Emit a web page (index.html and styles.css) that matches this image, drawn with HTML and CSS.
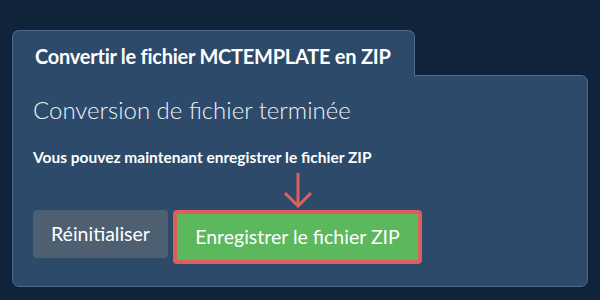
FILE: index.html
```html
<!DOCTYPE html>
<html lang="fr">
<head>
	<meta charset="UTF-8">
	<meta name="viewport" content="width=device-width, initial-scale=1.0">
	<title>Convertir MCTEMPLATE en ZIP</title>
	<link rel="stylesheet" href="styles.css">
</head>
<body>

	<div class="converter">
		<div class="converter__tab">Convertir le fichier MCTEMPLATE en ZIP</div>

		<div class="converter__panel">
			<h2 class="converter__title">Conversion de fichier terminée</h2>
			<p class="converter__text">Vous pouvez maintenant enregistrer le fichier ZIP</p>

			<div class="converter__actions">
				<button class="btn btn--reset">Réinitialiser</button>
				<div class="save">
					<svg class="save__arrow" width="32" height="36" viewBox="0 0 32 36">
						<path d="M16 1 L16 34 M3 21 L16 34 L29 21" fill="none" stroke="#db5f5a" stroke-width="3"/>
					</svg>
					<button class="btn btn--save">Enregistrer le fichier ZIP</button>
				</div>
			</div>
		</div>
	</div>

</body>
</html>
```

FILE: styles.css
```css
*, *::after, *::before {
	box-sizing: border-box;
}

:root {
	--bg: #10233a;
	--panel: #2d4a6a;
	--line: #4e6a8c;
}

body {
	margin: 0;
	padding: 30px 12px 13px;
	background-color: var(--bg);
	font-family: Lato, "Open Sans", sans-serif;
	color: #fff;
}

.converter__tab {
	position: relative;
	z-index: 1;
	display: inline-block;
	width: 403px;
	height: 46px;
	margin-bottom: -1px;
	padding: 13px 0 0 22px;
	font-size: 20px;
	font-weight: bold;
	line-height: 24px;
	letter-spacing: -0.25px;
	background-color: var(--panel);
	border: 1px solid var(--line);
	border-bottom: none;
	border-radius: 7px 7px 0 0;
}

.converter__panel {
	padding: 20px 20px 22px;
	background-color: var(--panel);
	border: 1px solid var(--line);
	border-radius: 0 7px 7px 7px;
}

.converter__title {
	margin: 0;
	font-size: 24px;
	font-weight: 300;
	line-height: 1.2;
	color: #eef2f6;
}

.converter__text {
	margin: 23px 0 0;
	font-size: 15.5px;
	font-weight: bold;
	line-height: 1.2;
}

.converter__actions {
	display: flex;
	align-items: flex-start;
	gap: 5px;
	margin-top: 43.5px;
}

.btn {
	display: block;
	margin: 0;
	font-family: inherit;
	font-size: 19.5px;
	font-weight: normal;
	color: #fff;
	cursor: pointer;
}

.btn--reset {
	width: 135px;
	height: 48px;
	padding: 0;
	background-color: #4e5f71;
	border: none;
	border-radius: 4px;
}

.save {
	position: relative;
}

.save__arrow {
	position: absolute;
	top: -38px;
	left: 109px;
}

.btn--save {
	width: 249px;
	height: 54px;
	padding: 0;
	background-color: #5cb85c;
	border: 4px solid #db5f5a;
	border-radius: 4px;
}
```
